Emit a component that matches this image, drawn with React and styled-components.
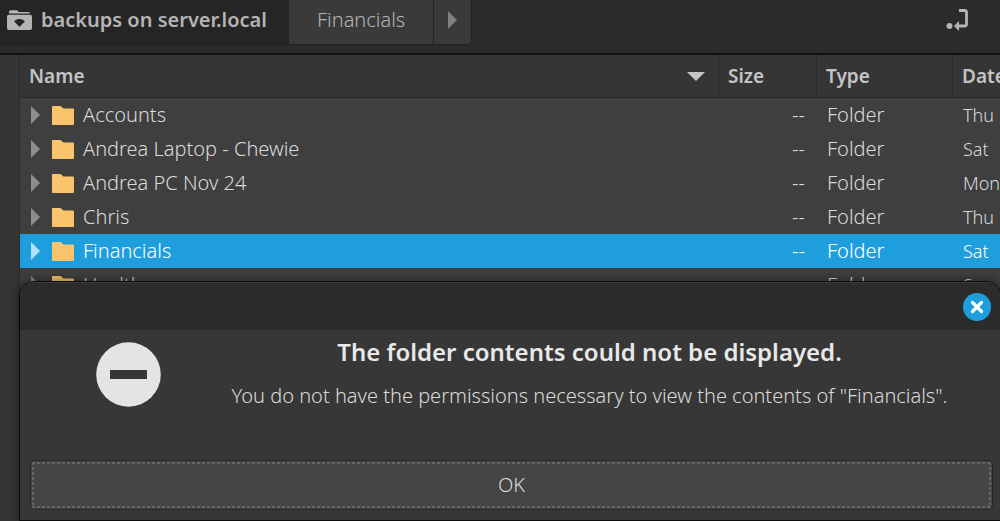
import React from 'react';
import styled, { createGlobalStyle } from 'styled-components';

const GlobalStyle = createGlobalStyle`
  * {
    box-sizing: border-box;
  }

  body {
    margin: 0;
    background: #353535;
    color: #dadada;
    font: 20px/24px "Noto Sans", "Open Sans", sans-serif;
  }

  button {
    font: inherit;
    color: inherit;
    border: none;
    padding: 0;
  }
`;

const Window = styled.div`
  position: relative;
  display: flex;
  flex-direction: column;
  height: 100vh;
  overflow: hidden;
`;

const Toolbar = styled.header`
  display: flex;
  align-items: flex-start;
  justify-content: space-between;
  flex: none;
  padding: 0 31px 8px 0;
  background: #2b2b2b;
  border-bottom: 2px solid #111;
`;

const PathBar = styled.nav`
  display: flex;
  border: solid #222;
  border-width: 0 1px 1px 0;
  border-radius: 0 0 5px 0;
  overflow: hidden;
`;

const Crumb = styled.button`
  display: flex;
  align-items: center;
  gap: 9px;
  height: 44px;
  padding: ${props => props.$padding};
  padding-bottom: 4px;
  font-weight: ${props => (props.$active ? 600 : 300)};
  white-space: nowrap;
  color: #b4b4b4;
  background: ${props => (props.$active ? '#252525' : '#3a3a3a')};

  & + & {
    border-left: 1px solid #242424;
  }
`;

const NextCrumb = styled(Crumb)`
  color: #808080;
`;

const LocationButton = styled.button`
  display: flex;
  margin-top: 8px;
  background: none;
`;

const Main = styled.div`
  display: flex;
  flex: 1;
  min-height: 0;
`;

const Sidebar = styled.aside`
  flex: none;
  width: 20px;
  border-right: 1px solid #292929;
`;

const Listing = styled.main`
  flex: 1;
  min-width: 0;
  background: #3f3f3f;
`;

const Table = styled.table`
  width: 100%;
  table-layout: fixed;
  border-collapse: separate;
  border-spacing: 0;
`;

const Heading = styled.th`
  width: ${props => props.$width};
  height: 43px;
  padding: 0 9px;
  overflow: hidden;
  text-align: left;
  font-size: 19px;
  font-weight: 600;
  white-space: nowrap;
  color: #c4c4c4;
  background: #353535;
  border-bottom: 1px solid #282828;

  & + & {
    border-left: 1px solid #282828;
  }
`;

const HeadingLabel = styled.div`
  display: flex;
  align-items: center;
  justify-content: space-between;
  padding-right: 4px;
`;

const Row = styled.tr`
  color: ${props => (props.$selected ? '#fff' : '#dadada')};
  background: ${props => (props.$selected ? '#1f9ede' : 'transparent')};
`;

const Cell = styled.td`
  height: 34px;
  padding: 0 11px;
  overflow: hidden;
  text-align: ${props => (props.$right ? 'right' : 'left')};
  font-weight: 300;
  white-space: nowrap;
`;

const DateCell = styled(Cell)`
  padding-right: 0;
  font-size: 18px;
`;

const FileName = styled.div`
  display: flex;
  align-items: center;
`;

const Expander = styled.button`
  display: flex;
  margin-right: 12px;
  background: none;
  color: ${props => (props.$selected ? '#b5e2fa' : '#8d8d8d')};
`;

const FolderSvg = styled.svg`
  margin-right: 9px;
`;

const Dialog = styled.section`
  position: absolute;
  top: 281px;
  left: 19px;
  right: -1px;
  overflow: hidden;
  background: #373737;
  border: 1px solid #0c0c0c;
  border-radius: 14px 14px 0 0;
  box-shadow: 0 0 12px rgba(0, 0, 0, 0.5);
`;

const TitleBar = styled.div`
  display: flex;
  align-items: center;
  justify-content: flex-end;
  height: 48px;
  padding: 0 9px;
  background: #2b2b2b;
  border-top: 1px solid #3b3b3b;
`;

const CloseButton = styled.button`
  display: flex;
  border-radius: 50%;
  background: #1f9ede;
`;

const Message = styled.div`
  display: flex;
  align-items: flex-start;
  min-height: 130px;
  padding: 12px 0 0 76px;
`;

const MessageText = styled.div`
  flex: 1;
  padding-left: 18px;
  text-align: center;
`;

const Title = styled.h1`
  margin: 0 0 22px;
  font-size: 24px;
  line-height: 20px;
  font-weight: 600;
  color: #e8e8e8;
`;

const Detail = styled.p`
  margin: 0;
  font-weight: 300;
`;

const Actions = styled.div`
  display: flex;
  padding: 0 7px 10px 10px;
`;

const ActionButton = styled.button`
  position: relative;
  flex: 1;
  height: 50px;
  font-weight: 300;
  background: #454545;
  border: 1px solid #262626;
  border-radius: 5px;

  &::after {
    --across: repeating-linear-gradient(90deg, #646464 0 3px, transparent 3px 5px);
    --down: repeating-linear-gradient(#646464 0 3px, transparent 3px 5px);
    content: '';
    position: absolute;
    inset: 1px;
    background:
      var(--across) top / 100% 2px no-repeat,
      var(--across) bottom / 100% 2px no-repeat,
      var(--down) left / 2px 100% no-repeat,
      var(--down) right / 2px 100% no-repeat;
  }
`;

const ServerFolderIcon = () => (
  <svg width="25" height="20" viewBox="0 0 25 20" aria-hidden="true">
    <path d="M2 3.500V2Q2 .2 3.800.2H10L12 2H21.500Q23 2 23 3.500Z" fill="#b4b4b4" />
    <path d="M1.800 4.800H23.200Q25 4.800 25 6.500V18Q25 20 23 20H2Q0 20 0 18V6.500Q0 4.800 1.800 4.800Z" fill="#b4b4b4" />
    <path d="M7 11.300Q12.500 6.500 18 11.300L12.500 17Z" fill="#252525" />
  </svg>
);

const RightArrow = () => (
  <svg width="9" height="18" viewBox="0 0 9 18" aria-hidden="true">
    <path d="M0 0L9 9L0 18Z" fill="currentColor" />
  </svg>
);

const SortArrow = () => (
  <svg width="18" height="9" viewBox="0 0 18 9" aria-hidden="true">
    <path d="M0 0H18L9 9Z" fill="#c4c4c4" />
  </svg>
);

const FolderIcon = () => (
  <FolderSvg width="22" height="19" viewBox="0 0 22 19" aria-hidden="true">
    <path d="M1 0H8.500L11.500 2.500H21Q22 2.500 22 3.500V18Q22 19 21 19H1Q0 19 0 18V1Q0 0 1 0Z" fill="#f9c46c" />
  </FolderSvg>
);

const LocationIcon = () => (
  <svg width="23" height="23" viewBox="0 0 23 23" aria-hidden="true">
    <circle cx="3.500" cy="18" r="3" fill="#b4b4b4" />
    <path d="M13 2.500H18.500Q20.500 2.500 20.500 4.500V16Q20.500 18 18.500 18H12" fill="none" stroke="#b4b4b4" strokeWidth="2.800" />
    <path d="M8 18L13 13V23Z" fill="#b4b4b4" />
  </svg>
);

const CloseIcon = () => (
  <svg width="28" height="28" viewBox="0 0 28 28" aria-hidden="true">
    <path d="M9.500 9.500L18.500 18.500M18.500 9.500L9.500 18.500" stroke="#fff" strokeWidth="3.200" strokeLinecap="round" />
  </svg>
);

const ErrorIcon = () => (
  <svg width="65" height="65" viewBox="0 0 65 65" aria-hidden="true">
    <circle cx="32.500" cy="32.500" r="32.300" fill="#e4e4e4" />
    <rect x="14" y="28" width="37" height="9" fill="#373737" />
  </svg>
);

const folders = [
  { name: 'Accounts', date: 'Thu' },
  { name: 'Andrea Laptop - Chewie', date: 'Sat' },
  { name: 'Andrea PC Nov 24', date: 'Mon' },
  { name: 'Chris', date: 'Thu' },
  { name: 'Financials', date: 'Sat', selected: true },
  { name: 'Health', date: 'Sun' },
];

const FolderRow = ({ folder }) => (
  <Row $selected={folder.selected}>
    <Cell>
      <FileName>
        <Expander $selected={folder.selected} aria-label={`Expand ${folder.name}`}>
          <RightArrow />
        </Expander>
        <FolderIcon />
        {folder.name}
      </FileName>
    </Cell>
    <Cell $right>--</Cell>
    <Cell>Folder</Cell>
    <DateCell>{folder.date}</DateCell>
  </Row>
);

export default () => (
  <Window>
    <GlobalStyle />
    <Toolbar>
      <PathBar>
        <Crumb $active $padding="0 21px 0 7px">
          <ServerFolderIcon />
          backups on server.local
        </Crumb>
        <Crumb $padding="0 28px">Financials</Crumb>
        <NextCrumb $padding="0 14px" aria-label="Next folder">
          <RightArrow />
        </NextCrumb>
      </PathBar>
      <LocationButton aria-label="Toggle location entry">
        <LocationIcon />
      </LocationButton>
    </Toolbar>
    <Main>
      <Sidebar />
      <Listing>
        <Table>
          <thead>
            <tr>
              <Heading>
                <HeadingLabel>
                  Name
                  <SortArrow />
                </HeadingLabel>
              </Heading>
              <Heading $width="98px">Size</Heading>
              <Heading $width="136px">Type</Heading>
              <Heading $width="48px">Date</Heading>
            </tr>
          </thead>
          <tbody>
            {folders.map(folder => <FolderRow key={folder.name} folder={folder} />)}
          </tbody>
        </Table>
      </Listing>
    </Main>
    <Dialog role="alertdialog" aria-labelledby="title" aria-describedby="detail">
      <TitleBar>
        <CloseButton aria-label="Close">
          <CloseIcon />
        </CloseButton>
      </TitleBar>
      <Message>
        <ErrorIcon />
        <MessageText>
          <Title id="title">The folder contents could not be displayed.</Title>
          <Detail id="detail">
            You do not have the permissions necessary to view the contents of "Financials".
          </Detail>
        </MessageText>
      </Message>
      <Actions>
        <ActionButton>OK</ActionButton>
      </Actions>
    </Dialog>
  </Window>
);
